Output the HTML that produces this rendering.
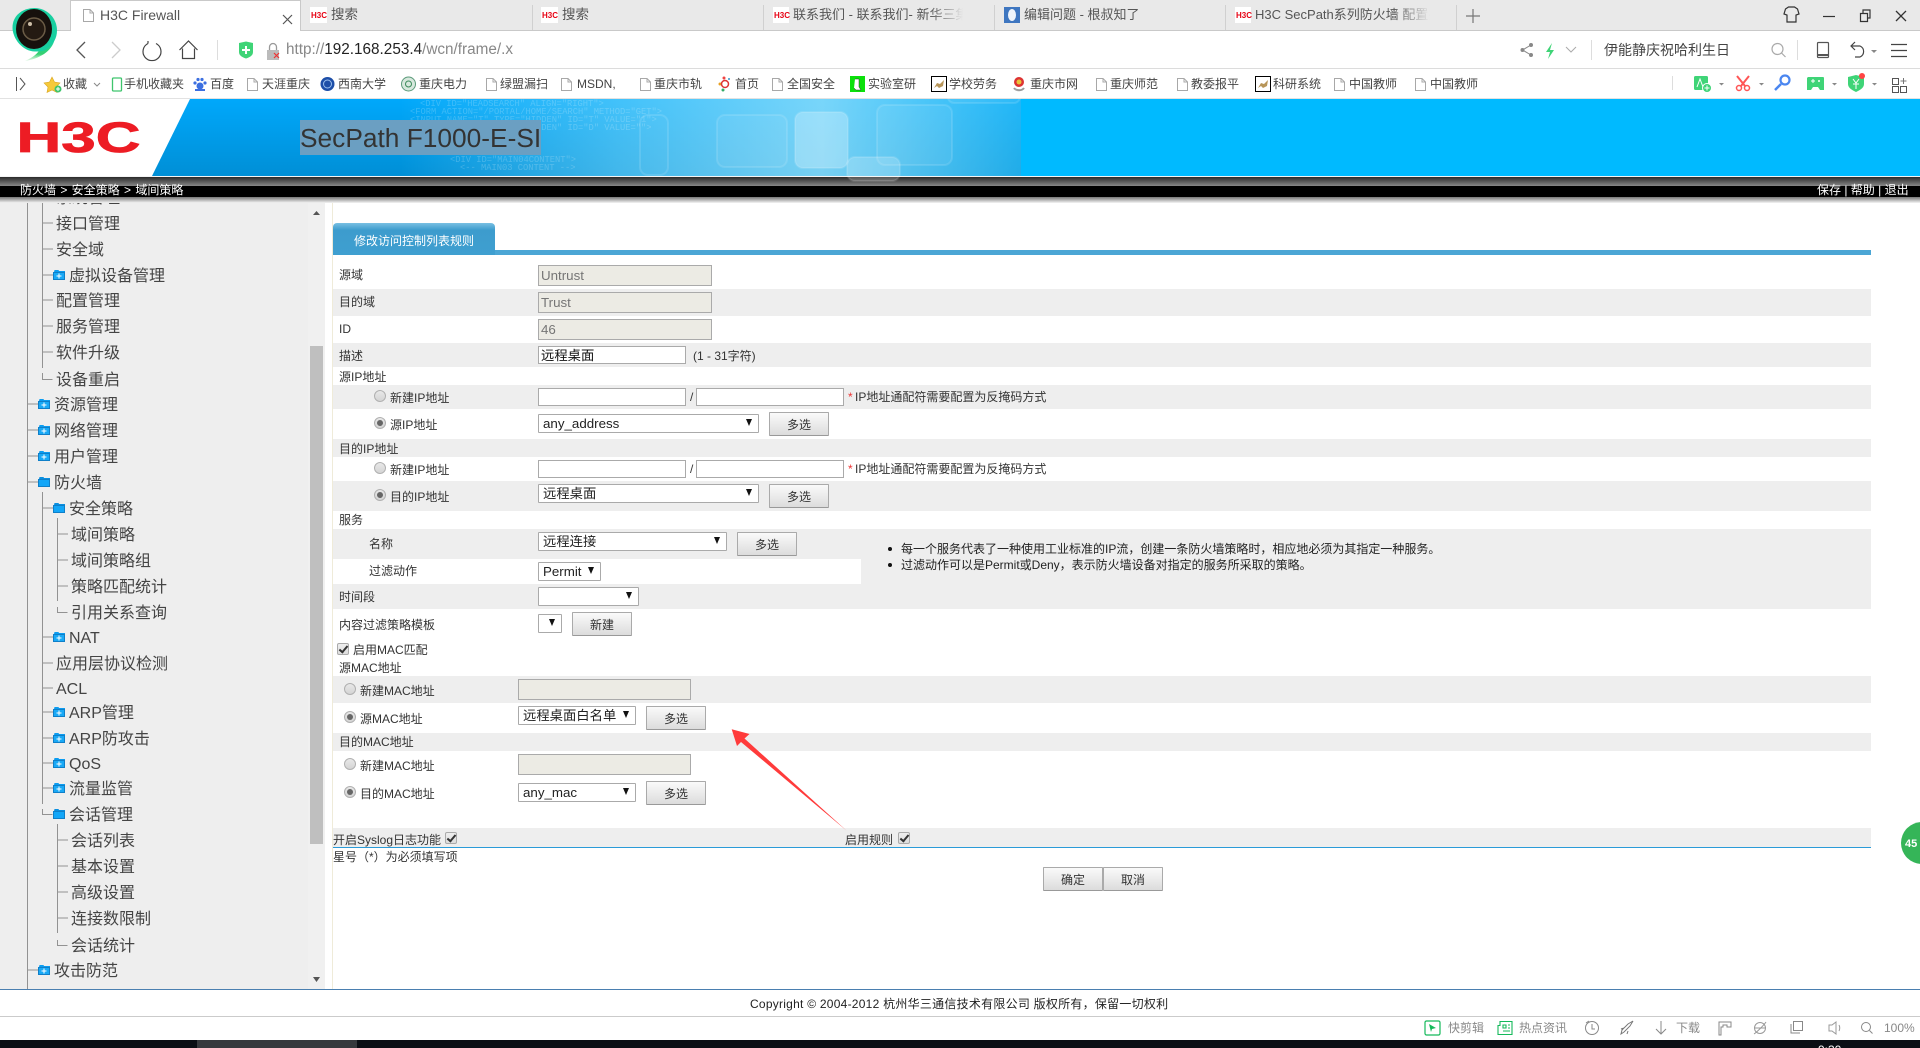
<!DOCTYPE html>
<html lang="zh-CN"><head><meta charset="utf-8"><title>H3C Firewall</title>
<style>
html,body{margin:0;padding:0;background:#fff}
body{position:relative;width:1920px;height:1048px;overflow:hidden;font-family:"Liberation Sans","Noto Sans CJK SC",sans-serif;color:#333}
.a{position:absolute}
.t{position:absolute;line-height:16px;font-size:12px;color:#333;white-space:nowrap}
.g{position:absolute;left:333px;width:1538px;background:#eee}
.tab{font-size:13px;color:#555}
.bm{font-size:12px;color:#444}
.m{position:absolute;font-size:16px;line-height:24px;color:#444;white-space:nowrap;margin-top:2px}
input{position:absolute;box-sizing:border-box;margin:0;border:1px solid #aaa;background:#fff;padding:0 2px;font:13.33px "Liberation Sans","Noto Sans CJK SC",sans-serif;color:#111;outline:0;border-radius:0}
input.d{background:#ecebe4;color:#757575;height:21px;width:174px;left:538px}
input.e{height:18px;width:148px}
.sel{position:absolute;box-sizing:border-box;height:19px;border:1px solid #aaa;background:#fff;font-size:13.33px;line-height:17px;padding-left:4px;color:#222;border-radius:1px;white-space:nowrap;overflow:hidden}
.sel:after{content:"";position:absolute;right:6px;top:4px;border-left:3.5px solid transparent;border-right:3.5px solid transparent;border-top:7px solid #111}
button{position:absolute;box-sizing:border-box;margin:0;padding:0;width:60px;height:24px;border:1px solid #aaa;border-bottom-color:#999;background:linear-gradient(#fafafa,#dcdcdc);font:12px "Liberation Sans","Noto Sans CJK SC",sans-serif;color:#333;border-radius:1px}
.r{position:absolute;box-sizing:border-box;width:12px;height:12px;border-radius:50%;border:1px solid #b0b0b0;background:linear-gradient(#e8e8e8,#d4d4d4)}
.r.c:after{content:"";position:absolute;left:2px;top:2px;width:6px;height:6px;border-radius:50%;background:#666}
.c1{position:absolute;box-sizing:border-box;width:12px;height:12px;border:1px solid #aaa;border-radius:2px;background:linear-gradient(#eee,#ddd)}
.c1:after{content:"";position:absolute;left:3px;top:0;width:3px;height:7px;border:solid #333;border-width:0 2px 2px 0;transform:rotate(40deg)}
.fade{-webkit-mask-image:linear-gradient(90deg,#000 80%,transparent);mask-image:linear-gradient(90deg,#000 80%,transparent)}
</style></head>
<body>
<!-- browser chrome backgrounds -->
<div class="a" style="left:0;top:0;width:1920px;height:30px;background:#e9e9e9"></div>
<div class="a" style="left:0;top:30px;width:1920px;height:1px;background:#c9c9c9"></div>
<div class="a" style="left:70px;top:0;width:231px;height:31px;box-sizing:border-box;background:#fff;border:1px solid #c9c9c9;border-bottom:0"></div>
<div class="a" style="left:0;top:68px;width:1920px;height:1px;background:#dcdcdc"></div>
<div class="a" style="left:0;top:98px;width:1920px;height:1px;background:#e2e2e2"></div>

<!-- banner -->
<div class="a" style="left:0;top:99px;width:1920px;height:77px;background:#00baff"></div>
<div class="a" style="left:0;top:99px;width:1021px;height:77px;background:linear-gradient(#00a8fb,#008fd6)"></div>
<div class="a" style="left:400px;top:99px;width:621px;height:77px;background:linear-gradient(90deg,rgba(120,215,250,0) 0%,rgba(120,215,250,.55) 35%,rgba(150,225,250,.8) 68%,rgba(60,195,245,.55) 100%)"></div>
<div class="a" style="left:0;top:176px;width:1920px;height:1px;background:#f4f4f4"></div>
<div class="a" style="left:0;top:177px;width:1920px;height:9px;background:linear-gradient(#2a2a2a,#888)"></div>
<div class="a" style="left:0;top:186px;width:1920px;height:11px;background:#000"></div>
<div class="a" style="left:0;top:197px;width:1920px;height:6px;background:linear-gradient(#777,#f4f4f4)"></div>

<!-- sidebar -->
<div class="a" style="left:0;top:203px;width:325px;height:786px;background:#eee;overflow:hidden">
  <div class="m" style="left:56px;top:-18px">系统管理</div>
</div>
<div class="a" style="left:308px;top:203px;width:17px;height:786px;background:#f0f0f0"></div>
<div class="a" style="left:310px;top:346px;width:13px;height:498px;background:#bfbfbf"></div>
<div class="a" style="left:332px;top:203px;width:1px;height:786px;background:#efebd9"></div>

<!-- form row backgrounds -->
<div class="g" style="top:289px;height:27px"></div>
<div class="g" style="top:343px;height:24px"></div>
<div class="g" style="top:385px;height:24px"></div>
<div class="g" style="top:439px;height:18px"></div>
<div class="g" style="top:481px;height:30px"></div>
<div class="g" style="top:529px;height:30px"></div>
<div class="g" style="top:559px;left:861px;width:1010px;height:25px"></div>
<div class="g" style="top:584px;height:25px"></div>
<div class="g" style="top:676px;height:27px"></div>
<div class="g" style="top:733px;height:18px"></div>
<div class="g" style="top:828px;height:19px"></div>
<div class="a" style="left:333px;top:847px;width:1538px;height:1px;background:#2a9bd8"></div>
<div class="a" style="left:495px;top:250px;width:1376px;height:5px;background:#4ba6d5"></div>
<div class="a" style="left:333px;top:223px;width:162px;height:32px;border-radius:4px 4px 0 0;background:linear-gradient(#79c0e2 0,#3d9ccd 22%,#3f9fd0 100%)"></div>

<!-- footer -->
<div class="a" style="left:0;top:989px;width:1920px;height:1px;background:#4a7fb0"></div>
<div class="a" style="left:0;top:1016px;width:1920px;height:1px;background:#cbcbcb"></div>
<div class="a" style="left:0;top:1040px;width:1920px;height:8px;background:#0a0e14"></div>
<div class="a" style="left:197px;top:1040px;width:160px;height:8px;background:#36393d"></div>

<!-- graphics -->
<svg class="a" style="left:0;top:0" width="1920" height="1048" viewBox="0 0 1920 1048" fill="none">
<defs>
<linearGradient id="lg" x1="0" y1="0" x2="0" y2="1"><stop offset="0" stop-color="#1fd8a8"/><stop offset=".7" stop-color="#35d070"/><stop offset="1" stop-color="#9fe8b0" stop-opacity=".3"/></linearGradient>
<symbol id="doc" viewBox="0 0 11 13" width="11" height="13"><path d="M.5.5h6.5l3.5 3.5v8.500h-10zM7 .5v3.500h3.500" stroke="#a8a8a8" fill="#fff"/></symbol>
<symbol id="fp" viewBox="0 0 12 10" width="12" height="10"><path d="M0 2h1l.500-2h4l.500 1h6v9h-12z" fill="#0c9cf0"/><path d="M.5 2.500h11v7h-11z" fill="#19a9f6" stroke="#0f7fc8"/><path d="M6 3.500v5M3.500 6h5" stroke="#fff"/></symbol>
<symbol id="fo" viewBox="0 0 12 10" width="12" height="10"><path d="M0 2h1l.500-2h4l.500 1h6v9h-12z" fill="#0a8fe0"/><path d="M.5 2.500h11v7h-11z" fill="#12a6f8" stroke="#0f7fc8"/></symbol>
<symbol id="bull" viewBox="0 0 16 16" width="16" height="16"><rect x=".5" y=".5" width="15" height="15" fill="#fff" stroke="#000"/><path d="M3 12l3-5 3 1 4-4-1 6-4 2-2-2z" fill="#b8965a"/></symbol>
</defs>

<!-- 360 logo -->
<path d="M55 38c-2 11-12 20-30 23 9-4 13-8 15-12z" fill="url(#lg)"/>
<path d="M34.500 8c12.500 0 22.500 10 22.500 22.500 0 8-4 13-8 17-3 3-6 4-14 4-12.500 0-22.500-13-22.500-24C12.500 16 22 8 34.500 8z" fill="#18cfa0"/>
<ellipse cx="34" cy="29" rx="18" ry="20" fill="#17110d"/>
<circle cx="34" cy="29" r="11" stroke="#6b5c46" stroke-width="1.500" fill="#241a12"/>
<circle cx="30" cy="24" r="2" fill="#cdbfa8"/>

<!-- tab icons -->
<use href="#doc" x="83" y="9"/>
<path d="M283 15l9 9M292 15l-9 9" stroke="#555" stroke-width="1.200"/>
<path d="M532.500 5v25M763.500 5v25M994.500 5v25M1225.500 5v25M1456.500 5v25" stroke="#d0d0d0"/>
<path d="M1466 16h14M1473 9v14" stroke="#777" stroke-width="1.200"/>
<rect x="310" y="7" width="17" height="16" fill="#fff"/><rect x="541" y="7" width="17" height="16" fill="#fff"/><rect x="773" y="7" width="16" height="16" fill="#fff"/><rect x="1235" y="7" width="16" height="16" fill="#fff"/>
<rect x="1004" y="7" width="16" height="16" fill="#3e76c0"/><ellipse cx="1012" cy="15" rx="4" ry="6" fill="#eef4fb"/>
<!-- window controls -->
<path d="M1785.500 9l3-2h6l3 2 1.500 5-3 1v7h-9v-7l-3-1z" stroke="#333" stroke-width="1.200"/>
<path d="M1823 16.500h12" stroke="#333" stroke-width="1.200"/>
<path d="M1860.500 13.500h7v8h-7zM1863 13v-3h7v8h-2" stroke="#333" stroke-width="1.200"/>
<path d="M1896 11l10 10M1906 11l-10 10" stroke="#333" stroke-width="1.300"/>

<!-- nav -->
<path d="M85 42l-8 8 8 8" stroke="#555" stroke-width="1.300"/>
<path d="M112 42l8 8-8 8" stroke="#ccc" stroke-width="1.300"/>
<path d="M148 43.500a9 9 0 1 0 8 0M148 43.500v-2.500" stroke="#444" stroke-width="1.200"/>
<path d="M179.500 50l9-9 9 9M182.500 48.500v10h12v-10" stroke="#444" stroke-width="1.200"/>
<path d="M217.500 40v20" stroke="#ddd"/>
<path d="M239 43l7-1.500 7 1.500v9c0 4-4 5.500-7 6.500-3-1-7-2.500-7-6.500z" fill="#3fd477"/><path d="M246 46v8M242 50h8" stroke="#fff" stroke-width="2"/>
<path d="M267 50h12v10h-12z" fill="#bbb"/><path d="M269.500 50v-3a3.500 3.500 0 0 1 7 0v3" stroke="#999" stroke-width="1.300"/><path d="M274 53l5 5M279 53l-5 5" stroke="#e33" stroke-width="1.200"/>
<circle cx="1522.500" cy="50" r="2" fill="#888"/><circle cx="1531" cy="45" r="2" fill="#888"/><circle cx="1531" cy="55" r="2" fill="#888"/><path d="M1522.500 50l8.500-5M1522.500 50l8.500 5" stroke="#888"/>
<path d="M1552 43l-6 9h4l-2 7 6-9h-4z" fill="#3fd477"/>
<path d="M1566 47l5 5 5-5" stroke="#aaa"/>
<path d="M1591.500 40v20M1797.500 40v20" stroke="#ddd"/>
<circle cx="1777.500" cy="49" r="5.500" stroke="#aaa" stroke-width="1.200"/><path d="M1781.500 53l4 4" stroke="#aaa" stroke-width="1.200"/>
<rect x="1817.500" y="42.500" width="11" height="15" rx="1" stroke="#555" stroke-width="1.200"/><path d="M1818 55h10" stroke="#555" stroke-width="2"/>
<path d="M1855 42l-4 4 4 4M1851 46h9a6 6 0 0 1 0 11h-5" stroke="#444" stroke-width="1.200"/>
<path d="M1871 50h6l-3 3z" fill="#888"/>
<path d="M1891 44.500h16M1891 50.500h16M1891 56.500h16" stroke="#444" stroke-width="1.300"/>

<!-- bookmark icons -->
<path d="M16.500 77v14" stroke="#555"/><path d="M20 78l5 6-5 6" stroke="#555"/>
<path d="M52 77l2.500 5 5.500 1-4 4 1 5.500-5-2.500-5 2.500 1-5.500-4-4 5.500-1z" fill="#f5c93a" stroke="#d9a520" stroke-width=".6"/><circle cx="58" cy="89" r="3.500" fill="#3fc56d"/><path d="M56 89h4M58 87v4" stroke="#fff"/>
<path d="M94 83l3 3 3-3" stroke="#888"/>
<rect x="112.500" y="78" width="9" height="13" rx="1" stroke="#3fc56d" stroke-width="1.300"/>
<circle cx="200" cy="86" r="3.500" fill="#3c6fe0"/><circle cx="195" cy="83" r="1.600" fill="#3c6fe0"/><circle cx="205" cy="83" r="1.600" fill="#3c6fe0"/><circle cx="198" cy="79.500" r="1.600" fill="#3c6fe0"/><circle cx="202" cy="79.500" r="1.600" fill="#3c6fe0"/><path d="M195 90h10" stroke="#3c6fe0" stroke-width="2"/>
<use href="#doc" x="247" y="78"/>
<circle cx="327.500" cy="84" r="7" fill="#1e4fa8"/><circle cx="327.500" cy="84" r="4" stroke="#9cc0ee"/>
<circle cx="408.500" cy="84" r="7" fill="#d7e8dd" stroke="#5b9a7a"/><circle cx="408.500" cy="84" r="3" stroke="#3a8a5a"/>
<use href="#doc" x="486" y="78"/><use href="#doc" x="561" y="78"/><use href="#doc" x="640" y="78"/>
<circle cx="724" cy="78" r="1.500" fill="#e44"/><circle cx="720" cy="84" r="1.500" fill="#e8a020"/><circle cx="725" cy="84" r="3.500" stroke="#d33" stroke-width="1.500"/><circle cx="723" cy="90" r="1.500" fill="#3a6"/><circle cx="729" cy="79" r="1" fill="#39c"/>
<use href="#doc" x="772" y="78"/>
<rect x="850" y="76" width="15" height="16" fill="#0be00b"/><path d="M855 79h4v8l2 3h-5l-2-2" fill="#fff" stroke="#333" stroke-width=".5"/>
<use href="#bull" x="931" y="76"/>
<circle cx="1019" cy="82" r="5" fill="#d33"/><circle cx="1019" cy="82" r="2.500" fill="#e9c23a"/><path d="M1014 88c2 3 8 3 10 0" stroke="#999" stroke-width="2"/>
<use href="#doc" x="1096" y="78"/><use href="#doc" x="1177" y="78"/>
<use href="#bull" x="1255" y="76"/>
<use href="#doc" x="1334" y="78"/><use href="#doc" x="1415" y="78"/>
<path d="M1672.500 76v14" stroke="#ddd"/>
<rect x="1694" y="76" width="14" height="14" rx="1.500" fill="#3fd477"/><circle cx="1707" cy="88" r="4.500" fill="#3fd477" stroke="#fff"/><path d="M1704.500 88h5M1707 85.500v5" stroke="#fff"/><path d="M1697 87l3-8 3 8" stroke="#fff"/>
<path d="M1719 83h5l-2.500 2.500z" fill="#888"/>
<path d="M1737 76l8 10M1749 76l-8 10" stroke="#f55" stroke-width="2"/><circle cx="1739" cy="88" r="2.500" stroke="#f55" stroke-width="1.500"/><circle cx="1747" cy="88" r="2.500" stroke="#f55" stroke-width="1.500"/>
<path d="M1759 83h5l-2.500 2.500z" fill="#888"/>
<circle cx="1785" cy="80" r="4.500" stroke="#4a86f0" stroke-width="2.200"/><path d="M1781 84l-6 6" stroke="#4a86f0" stroke-width="2.500"/>
<path d="M1808 77h15a1 1 0 0 1 1 1v12h-4l-2-3h-5l-2 3h-4v-12z" fill="#3fd477"/><path d="M1811 81h4M1813 79v4" stroke="#fff"/><circle cx="1819" cy="81" r="1" fill="#fff"/>
<path d="M1832 83h5l-2.500 2.500z" fill="#888"/>
<path d="M1848 77l8-2 8 2v7c0 4-4 6-8 8-4-2-8-4-8-8z" fill="#3fd477"/><path d="M1853 79l3 4 3-4M1853 84h6M1856 83v6" stroke="#fff"/><circle cx="1862" cy="76" r="3" fill="#f44"/>
<path d="M1872 83h5l-2.500 2.500z" fill="#888"/>
<path d="M1892.500 78.500h6v6h-6zM1892.500 86.500h6v6h-6zM1900.500 86.500h6v6h-6z" stroke="#555"/><path d="M1903.500 78v6M1900.500 81h6" stroke="#777"/>

<!-- banner art -->
<path d="M190 99h-190v77h152z" fill="#fff"/>
<text x="16.500" y="152" font-family="Liberation Sans" font-weight="bold" font-size="43" fill="#ed1c24" stroke="#ed1c24" stroke-width=".8" textLength="124" lengthAdjust="spacingAndGlyphs">H3C</text>
<g font-family="Liberation Mono" font-size="8.750" fill="#fff" fill-opacity=".2">
<text x="420" y="106">&lt;DIV ID="HEADSEARCH" ALIGN="RIGHT"&gt;</text>
<text x="410" y="114">&lt;FORM ACTION="/PORTAL/HOME/SEARCH" METHOD="GET"&gt;</text>
<text x="410" y="122">&lt;INPUT NAME="T" TYPE="HIDDEN" ID="T" VALUE="1"&gt;</text>
<text x="410" y="130">&lt;INPUT NAME="D" TYPE="HIDDEN" ID="D" VALUE=""&gt;</text>
<text x="450" y="154">&lt;/DIV&gt;</text>
<text x="450" y="162">&lt;DIV ID="MAIN04CONTENT"&gt;</text>
<text x="460" y="170">&lt;-- MAIN03 CONTENT --&gt;</text>
</g>
<g stroke="#fff" stroke-opacity=".12" stroke-width="2">
<rect x="640" y="115" width="28" height="60" rx="8" fill="#fff" fill-opacity=".02"/>
<rect x="717" y="115" width="70" height="52" rx="8" fill="#fff" fill-opacity=".05"/>
<rect x="795" y="112" width="53" height="56" rx="8" fill="#fff" fill-opacity=".25"/>
<rect x="877" y="105" width="75" height="60" rx="8" fill="#fff" fill-opacity=".06"/>
<rect x="847" y="157" width="53" height="24" rx="8" fill="#fff" fill-opacity=".2"/>
<rect x="948" y="90" width="72" height="13" rx="6" fill="#fff" fill-opacity=".05"/>
</g>
<rect x="300" y="120" width="241" height="35" fill="#6b9fc2"/>

<!-- tree lines -->
<g stroke="#929292" shape-rendering="crispEdges">
<path d="M27.500 203v786"/>
<path d="M42.500 203v165M42.500 373v6.500h10M42.500 492v312M42.500 809v5.500h10"/>
<path d="M57.500 518v83M57.500 607v5.500h10M57.500 824v109M57.500 940v5.500h10"/>
<path d="M43 223h10M43 249h10M43 275h10M43 300h10M43 326h10M43 352h10"/>
<path d="M28 404h10M28 430h10M28 456h10M28 482h10M28 970h10"/>
<path d="M43 508h10M43 637h10M43 663h10M43 688h10M43 712h10M43 738h10M43 763h10M43 788h10"/>
<path d="M58 534h10M58 560h10M58 586h10M58 840h10M58 866h10M58 892h10M58 918h10"/>
</g>
<use href="#fp" x="53" y="270"/>
<use href="#fp" x="38" y="399"/><use href="#fp" x="38" y="425"/><use href="#fp" x="38" y="451"/>
<use href="#fo" x="38" y="477"/><use href="#fo" x="53" y="503"/>
<use href="#fp" x="53" y="632"/><use href="#fp" x="53" y="707"/><use href="#fp" x="53" y="733"/><use href="#fp" x="53" y="758"/><use href="#fp" x="53" y="783"/>
<use href="#fo" x="53" y="809"/><use href="#fp" x="38" y="965"/>
<path d="M313 215h7l-3.500-4zM313 977h7l-3.500 5z" fill="#555"/>

<!-- status bar icons -->
<rect x="1425" y="1021" width="15" height="14" rx="1.500" stroke="#14b95a" stroke-width="1.200"/><path d="M1429 1024l7 4-4 1-1 3z" fill="#14b95a"/>
<path d="M1500 1021.500h12v13h-14v-9h2zM1503 1025h3v3h-3zM1508 1025h2M1508 1028h2M1503 1031h7" stroke="#14b95a" stroke-width="1.100"/>
<circle cx="1592" cy="1028" r="6.500" stroke="#888"/><path d="M1592 1024v5h3M1586 1023l3-2" stroke="#888"/>
<path d="M1621 1034l3-2 6-6 3-5-5 3-6 6zM1624 1028l-3 1M1628 1031l-1 3" stroke="#777"/>
<path d="M1661 1021v13M1656 1029l5 5 5-5" stroke="#888"/>
<path d="M1719 1022h12v5h-4v-2h-4v2h-2v8h-2z" stroke="#888" fill="none"/>
<circle cx="1760" cy="1028" r="5.500" stroke="#999"/><path d="M1755 1028h10M1754 1034c3-2 10-9 12-12" stroke="#999"/>
<path d="M1793.500 1021.500h9v9h-9zM1791 1024v9h9" stroke="#888"/>
<path d="M1829 1025h3l4-3v12l-4-3h-3zM1839 1025c1 2 1 4 0 6" stroke="#999"/>
<circle cx="1866" cy="1027" r="4.500" stroke="#888"/><path d="M1869.500 1030.500l3 3" stroke="#888"/>

<!-- arrow -->
<path d="M731.700 729.300L749.500 734 744.500 738.500 846.700 830.700 741 742 737 746z" fill="#ff3b3b"/>

<!-- side badge -->
<circle cx="1922" cy="843" r="23" fill="#fff" opacity=".9"/><circle cx="1922" cy="843" r="21" fill="#35b558"/>
<text x="1905" y="847" font-family="Liberation Sans" font-size="11" font-weight="bold" fill="#fff">45</text>
</svg>

<!-- tab text -->
<div class="t tab" style="left:100px;top:7px;font-size:14px">H3C Firewall</div>
<div class="t" style="left:311px;top:8px;font-size:8px;font-weight:bold;color:#e60012">H3C</div>
<div class="t tab" style="left:331px;top:7px;font-size:13.500px">搜索</div>
<div class="t" style="left:542px;top:8px;font-size:8px;font-weight:bold;color:#e60012">H3C</div>
<div class="t tab" style="left:562px;top:7px;font-size:13.500px">搜索</div>
<div class="t" style="left:774px;top:8px;font-size:8px;font-weight:bold;color:#e60012">H3C</div>
<div class="t tab fade" style="left:793px;top:7px;width:170px;overflow:hidden">联系我们 - 联系我们- 新华三集团</div>
<div class="t tab" style="left:1024px;top:7px">编辑问题 - 根叔知了</div>
<div class="t" style="left:1236px;top:8px;font-size:8px;font-weight:bold;color:#e60012">H3C</div>
<div class="t tab fade" style="left:1255px;top:7px;width:175px;overflow:hidden">H3C SecPath系列防火墙 配置指南</div>

<!-- address bar -->
<div class="t" style="left:286px;top:42px;font-size:15.300px;color:#888">http://<span style="color:#222">192.168.253.4</span>/wcn/frame/.x</div>
<div class="t" style="left:1604px;top:42px;font-size:14px;color:#444">伊能静庆祝哈利生日</div>

<!-- bookmarks -->
<div class="t bm" style="left:63px;top:76px">收藏</div>
<div class="t bm" style="left:124px;top:76px">手机收藏夹</div>
<div class="t bm" style="left:210px;top:76px">百度</div>
<div class="t bm" style="left:262px;top:76px">天涯重庆</div>
<div class="t bm" style="left:338px;top:76px">西南大学</div>
<div class="t bm" style="left:419px;top:76px">重庆电力</div>
<div class="t bm" style="left:500px;top:76px">绿盟漏扫</div>
<div class="t bm" style="left:577px;top:76px">MSDN,</div>
<div class="t bm" style="left:654px;top:76px">重庆市轨</div>
<div class="t bm" style="left:735px;top:76px">首页</div>
<div class="t bm" style="left:787px;top:76px">全国安全</div>
<div class="t bm" style="left:868px;top:76px">实验室研</div>
<div class="t bm" style="left:949px;top:76px">学校劳务</div>
<div class="t bm" style="left:1030px;top:76px">重庆市网</div>
<div class="t bm" style="left:1110px;top:76px">重庆师范</div>
<div class="t bm" style="left:1191px;top:76px">教委报平</div>
<div class="t bm" style="left:1273px;top:76px">科研系统</div>
<div class="t bm" style="left:1349px;top:76px">中国教师</div>
<div class="t bm" style="left:1430px;top:76px">中国教师</div>

<!-- banner title and bar -->
<div class="t" style="left:300px;top:121px;line-height:35px;font-size:26.300px;color:#333">SecPath F1000-E-SI</div>
<div class="t" style="left:20px;top:182px;color:#fff;word-spacing:1px">防火墙 &gt; 安全策略 &gt; 域间策略</div>
<div class="t" style="left:1817px;top:182px;color:#fff">保存 | 帮助 | 退出</div>

<!-- tree -->
<div class="m" style="left:56px;top:211px">接口管理</div>
<div class="m" style="left:56px;top:237px">安全域</div>
<div class="m" style="left:69px;top:263px">虚拟设备管理</div>
<div class="m" style="left:56px;top:288px">配置管理</div>
<div class="m" style="left:56px;top:314px">服务管理</div>
<div class="m" style="left:56px;top:340px">软件升级</div>
<div class="m" style="left:56px;top:367px">设备重启</div>
<div class="m" style="left:54px;top:392px">资源管理</div>
<div class="m" style="left:54px;top:418px">网络管理</div>
<div class="m" style="left:54px;top:444px">用户管理</div>
<div class="m" style="left:54px;top:470px">防火墙</div>
<div class="m" style="left:69px;top:496px">安全策略</div>
<div class="m" style="left:71px;top:522px">域间策略</div>
<div class="m" style="left:71px;top:548px">域间策略组</div>
<div class="m" style="left:71px;top:574px">策略匹配统计</div>
<div class="m" style="left:71px;top:600px">引用关系查询</div>
<div class="m" style="left:69px;top:625px">NAT</div>
<div class="m" style="left:56px;top:651px">应用层协议检测</div>
<div class="m" style="left:56px;top:676px">ACL</div>
<div class="m" style="left:69px;top:700px">ARP管理</div>
<div class="m" style="left:69px;top:726px">ARP防攻击</div>
<div class="m" style="left:69px;top:751px">QoS</div>
<div class="m" style="left:69px;top:776px">流量监管</div>
<div class="m" style="left:69px;top:802px">会话管理</div>
<div class="m" style="left:71px;top:828px">会话列表</div>
<div class="m" style="left:71px;top:854px">基本设置</div>
<div class="m" style="left:71px;top:880px">高级设置</div>
<div class="m" style="left:71px;top:906px">连接数限制</div>
<div class="m" style="left:71px;top:933px">会话统计</div>
<div class="m" style="left:54px;top:958px">攻击防范</div>

<!-- form -->
<div class="t" style="left:354px;top:233px;color:#fff">修改访问控制列表规则</div>
<div class="t" style="left:339px;top:267px">源域</div>
<div class="t" style="left:339px;top:294px">目的域</div>
<div class="t" style="left:339px;top:321px">ID</div>
<div class="t" style="left:339px;top:348px">描述</div>
<div class="t" style="left:339px;top:369px">源IP地址</div>
<div class="t" style="left:390px;top:390px">新建IP地址</div>
<div class="t" style="left:390px;top:417px">源IP地址</div>
<div class="t" style="left:339px;top:441px">目的IP地址</div>
<div class="t" style="left:390px;top:462px">新建IP地址</div>
<div class="t" style="left:390px;top:489px">目的IP地址</div>
<div class="t" style="left:339px;top:512px">服务</div>
<div class="t" style="left:369px;top:536px">名称</div>
<div class="t" style="left:369px;top:563px">过滤动作</div>
<div class="t" style="left:339px;top:589px">时间段</div>
<div class="t" style="left:339px;top:617px">内容过滤策略模板</div>
<div class="t" style="left:353px;top:642px">启用MAC匹配</div>
<div class="t" style="left:339px;top:660px">源MAC地址</div>
<div class="t" style="left:360px;top:683px">新建MAC地址</div>
<div class="t" style="left:360px;top:711px">源MAC地址</div>
<div class="t" style="left:339px;top:734px">目的MAC地址</div>
<div class="t" style="left:360px;top:758px">新建MAC地址</div>
<div class="t" style="left:360px;top:786px">目的MAC地址</div>
<div class="t" style="left:333px;top:832px">开启Syslog日志功能</div>
<div class="t" style="left:845px;top:832px">启用规则</div>
<div class="t" style="left:333px;top:849px">星号（*）为必须填写项</div>

<input class="d" style="top:265px" value="Untrust" disabled>
<input class="d" style="top:292px" value="Trust" disabled>
<input class="d" style="top:319px" value="46" disabled>
<input class="e" style="left:538px;top:346px;padding-bottom:2px" value="远程桌面">
<div class="t" style="left:693px;top:348px">(1 - 31字符)</div>

<div class="r" style="left:374px;top:390px"></div>
<div class="r c" style="left:374px;top:417px"></div>
<div class="r" style="left:374px;top:462px"></div>
<div class="r c" style="left:374px;top:489px"></div>
<input class="e" style="left:538px;top:388px"><div class="t" style="left:690px;top:389px">/</div><input class="e" style="left:696px;top:388px">
<div class="t" style="left:848px;top:389px;color:#e33">*</div><div class="t" style="left:855px;top:389px">IP地址通配符需要配置为反掩码方式</div>
<input class="e" style="left:538px;top:460px"><div class="t" style="left:690px;top:461px">/</div><input class="e" style="left:696px;top:460px">
<div class="t" style="left:848px;top:461px;color:#e33">*</div><div class="t" style="left:855px;top:461px">IP地址通配符需要配置为反掩码方式</div>

<div class="sel" style="left:538px;top:414px;width:221px">any_address</div>
<button style="left:769px;top:412px">多选</button>
<div class="sel" style="left:538px;top:484px;width:221px">远程桌面</div>
<button style="left:769px;top:484px">多选</button>
<div class="sel" style="left:538px;top:532px;width:189px">远程连接</div>
<button style="left:737px;top:532px">多选</button>
<div class="sel" style="left:538px;top:562px;width:63px">Permit</div>
<div class="sel" style="left:538px;top:587px;width:101px"></div>
<div class="sel" style="left:538px;top:614px;width:24px"></div>
<button style="left:572px;top:612px">新建</button>

<div class="c1" style="left:337px;top:643px"></div>
<div class="r" style="left:344px;top:683px"></div>
<div class="r c" style="left:344px;top:711px"></div>
<div class="r" style="left:344px;top:758px"></div>
<div class="r c" style="left:344px;top:786px"></div>
<input style="left:518px;top:679px;width:173px;height:21px;background:#ecebe4" disabled>
<div class="sel" style="left:518px;top:706px;width:118px">远程桌面白名单</div>
<button style="left:646px;top:706px">多选</button>
<input style="left:518px;top:754px;width:173px;height:21px;background:#ecebe4" disabled>
<div class="sel" style="left:518px;top:783px;width:118px">any_mac</div>
<button style="left:646px;top:781px">多选</button>

<div class="c1" style="left:445px;top:832px"></div>
<div class="c1" style="left:898px;top:832px"></div>
<button style="left:1043px;top:867px">确定</button>
<button style="left:1103px;top:867px">取消</button>

<div class="a" style="left:888px;top:547px;width:4px;height:4px;border-radius:50%;background:#111"></div>
<div class="a" style="left:888px;top:563px;width:4px;height:4px;border-radius:50%;background:#111"></div>
<div class="t" style="left:901px;top:541px;color:#222">每一个服务代表了一种使用工业标准的IP流，创建一条防火墙策略时，相应地必须为其指定一种服务。</div>
<div class="t" style="left:901px;top:557px;color:#222">过滤动作可以是Permit或Deny，表示防火墙设备对指定的服务所采取的策略。</div>

<!-- footer text -->
<div class="t" style="left:750px;top:996px;color:#222;letter-spacing:.25px">Copyright © 2004-2012 杭州华三通信技术有限公司 版权所有，保留一切权利</div>
<div class="t" style="left:1448px;top:1020px;color:#888">快剪辑</div>
<div class="t" style="left:1519px;top:1020px;color:#888">热点资讯</div>
<div class="t" style="left:1676px;top:1020px;color:#888">下载</div>
<div class="t" style="left:1884px;top:1020px;color:#888">100%</div>
<div class="a" style="left:1818px;top:1044px;width:24px;height:4px;overflow:hidden;color:#fff;font-size:12px;line-height:12px">9:30</div>
</body></html>
